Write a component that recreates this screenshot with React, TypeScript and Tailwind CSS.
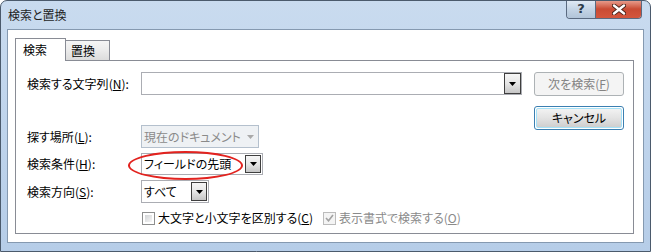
import React from 'react'

const Arrow = ({ color = '#000' }: { color?: string }) => (
  <svg width="7" height="4" viewBox="0 0 7 4">
    <path d="M0 0h7L3.5 4z" fill={color} />
  </svg>
)

const DropButton = ({ w }: { w: string }) => (
  <div
    className={`${w} h-full flex items-center justify-center border border-[#3f3f3f] bg-gradient-to-b from-[#f6f6f6] via-[#e6e6e6] to-[#c6c6c6]`}
  >
    <Arrow />
  </div>
)

const Combo = ({
  text,
  w,
  h,
  btn,
}: {
  text: string
  w: string
  h: string
  btn: string
}) => (
  <div
    className={`${w} ${h} flex items-stretch justify-between border border-[#abadb3] bg-white p-[1px]`}
  >
    <span className="pl-[1px] leading-[18px] self-center">{text}</span>
    <DropButton w={btn} />
  </div>
)

const Label = ({ text, k }: { text: string; k: string }) => (
  <div className="w-[114px] shrink-0">
    {text}(<span className="underline">{k}</span>):
  </div>
)

export default function App() {
  return (
    <div className="w-[651px] h-[252px] flex flex-col overflow-hidden rounded-t-[7px] border border-[#4b5a6c] bg-gradient-to-b from-[#c9dbef] via-[#bfd4ec] to-[#b6cde8] text-[12px] leading-[16px] text-black [font-family:'Noto_Sans_CJK_JP',sans-serif] [font-feature-settings:'palt']">
      {/* title bar */}
      <div className="h-[28px] shrink-0 flex items-start justify-between">
        <div className="pl-[7px] pt-[6px] text-[#1e1e1e]">検索と置換</div>
        <div className="flex mr-[8px] -mt-px h-[19px] rounded-b-[4px] border border-t-0 border-[#5a6a80] overflow-hidden">
          <div className="w-[29px] flex items-center justify-center bg-gradient-to-b from-[#e3ecf6] via-[#c5d5e6] to-[#b1c4d8] border-r border-[#5a6a80] font-bold text-[13px] text-[#2c3948] [font-family:'DejaVu_Sans',sans-serif]">
            ?
          </div>
          <div className="w-[45px] flex items-center justify-center bg-gradient-to-b from-[#e9a394] via-[#c94b34] to-[#d4563d]">
            <svg width="14" height="11" viewBox="0 0 14 11">
              <path d="M2 1.5l10 8M12 1.5l-10 8" stroke="#4a2218" strokeWidth="4.2" strokeLinecap="round" />
              <path d="M2 1.5l10 8M12 1.5l-10 8" stroke="#fff" strokeWidth="2.4" strokeLinecap="round" />
            </svg>
          </div>
        </div>
      </div>

      {/* client area */}
      <div className="mx-[6px] h-[214px] shrink-0 border border-[#8599b0] bg-white pl-[7px] pt-[8px]">
        {/* tabs */}
        <div className="flex items-end h-[22px]">
          <div className="relative z-10 w-[51px] h-[23px] -mb-px border border-b-0 border-[#898c95] bg-white pl-[7px] pt-[3px]">
            検索
          </div>
          <div className="w-[44px] h-[20px] border border-l-0 border-b-0 border-[#898c95] bg-gradient-to-b from-[#f5f5f5] via-[#ebebeb] to-[#dcdcdc] pl-[5px] pt-[2px]">
            置換
          </div>
        </div>

        {/* panel */}
        <div className="w-[619px] h-[174px] border border-[#898c95] flex pl-[11px] pt-[11px]">
          <div className="w-[495px] flex flex-col">
            <div className="h-[23px] flex items-center">
              <Label text="検索する文字列" k="N" />
              <div className="w-[381px] h-[23px] flex justify-end border border-[#abadb3] bg-white p-[0px]">
                <DropButton w="w-[17px]" />
              </div>
            </div>

            <div className="mt-[30px] h-[23px] flex items-center">
              <Label text="探す場所" k="L" />
              <div className="w-[118px] h-[23px] flex items-center justify-between border border-[#b4c0cd] bg-[#eef1f4] text-[#8a8a8a]">
                <span className="pl-[2px]">現在のドキュメント</span>
                <div className="w-[16px] flex justify-center">
                  <Arrow color="#a9a9a9" />
                </div>
              </div>
            </div>

            <div className="mt-[5px] h-[22px] flex items-center">
              <Label text="検索条件" k="H" />
              <div className="relative">
                <Combo text="フィールドの先頭" w="w-[122px]" h="h-[22px]" btn="w-[16px]" />
                <div className="absolute left-[-13px] top-[-2px] w-[115px] h-[29px] rounded-[50%] border-2 border-[#e2231f]" />
              </div>
            </div>

            <div className="mt-[5px] h-[23px] flex items-center">
              <Label text="検索方向" k="S" />
              <Combo text="すべて" w="w-[68px]" h="h-[23px]" btn="w-[16px]" />
            </div>

            <div className="mt-[7px] h-[16px] flex items-center pl-[115px]">
              <div className="w-[181px] flex items-center">
                <div className="w-[13px] h-[13px] border border-[#8e8f8f] p-[2px] bg-white">
                  <div className="w-full h-full bg-gradient-to-br from-[#d2d4d6] to-[#f6f6f6]" />
                </div>
                <span className="ml-[3px]">
                  大文字と小文字を区別する(<span className="underline">C</span>)
                </span>
              </div>
              <div className="flex items-center text-[#8a8a8a]">
                <div className="w-[13px] h-[13px] border border-[#bcbcbc] bg-[#f4f4f4] flex items-center justify-center">
                  <svg width="9" height="8" viewBox="0 0 9 8">
                    <path d="M1 4l2.5 2.8L8 1" stroke="#a2a2a2" strokeWidth="1.6" fill="none" />
                  </svg>
                </div>
                <span className="ml-[3px]">
                  表示書式で検索する(<span className="underline">O</span>)
                </span>
              </div>
            </div>
          </div>

          {/* buttons */}
          <div className="ml-[12px] w-[90px] flex flex-col">
            <div className="h-[24px] flex items-center justify-center rounded-[3px] border border-[#adb2b5] bg-[#f4f4f4] text-[#838383]">
              次を検索(<span className="underline">F</span>)
            </div>
            <div className="mt-[10px] h-[24px] rounded-[3px] border border-[#3c7fb1] p-px">
              <div className="h-full flex items-center justify-center rounded-[2px] border border-[#a6e2f7] bg-gradient-to-b from-[#f2f2f2] via-[#e3e3e3] to-[#cfcfcf]">
                キャンセル
              </div>
            </div>
          </div>
        </div>
      </div>
    </div>
  )
}
